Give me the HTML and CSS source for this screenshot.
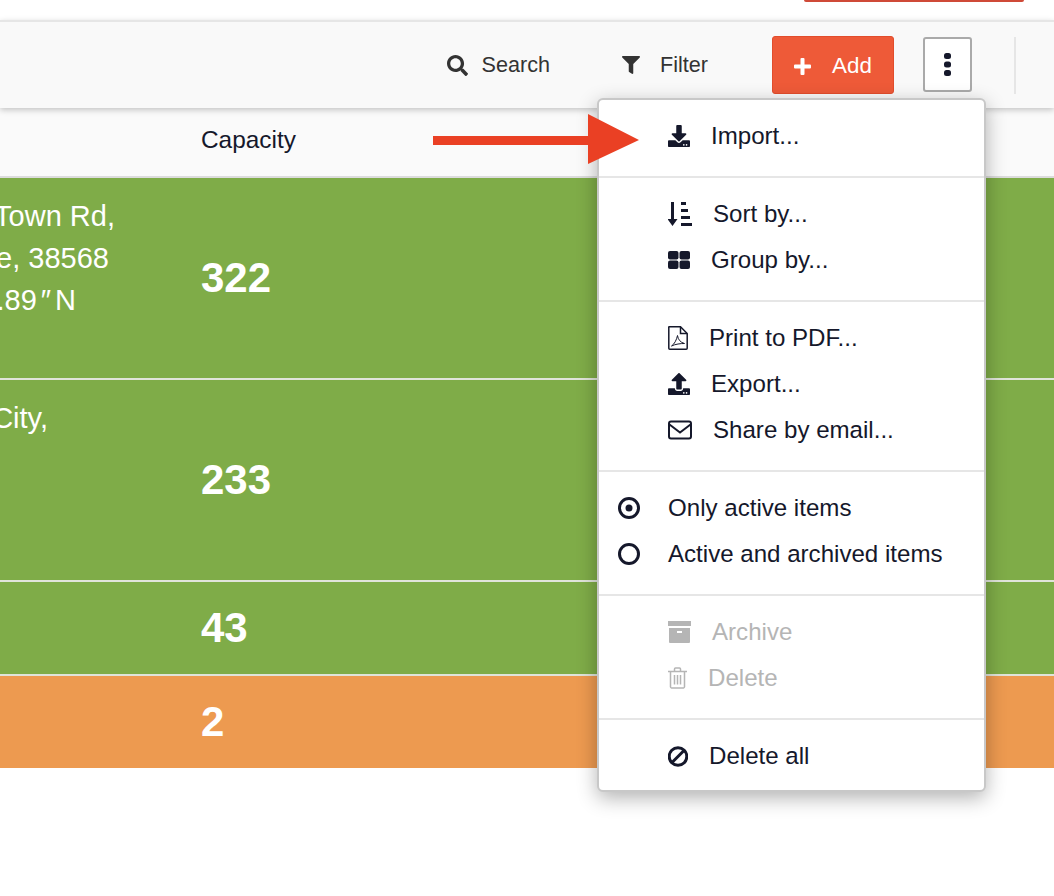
FILE: index.html
```html
<!DOCTYPE html>
<html lang="en">
<head>
    <meta charset="UTF-8">
    <title>Stores</title>
    <link rel="stylesheet" href="styles.css">
</head>
<body>
    <div class="topbar"><span class="top-button"></span></div>

    <div class="toolbar">
        <a class="tool tool-search">
            <svg class="tool-icon" width="21" height="21" viewBox="0 0 512 512"><path d="M505 442.7L405.3 343c-4.5-4.5-10.6-7-17-7H372c27.6-35.3 44-79.7 44-128C416 93.1 322.9 0 208 0S0 93.1 0 208s93.1 208 208 208c48.3 0 92.7-16.4 128-44v16.3c0 6.4 2.5 12.5 7 17l99.7 99.7c9.4 9.4 24.6 9.4 33.9 0l28.3-28.3c9.4-9.4 9.4-24.6.1-34zM208 336c-70.7 0-128-57.2-128-128 0-70.7 57.2-128 128-128 70.7 0 128 57.2 128 128 0 70.7-57.2 128-128 128z"/></svg>
            Search
        </a>
        <a class="tool tool-filter">
            <svg class="tool-icon" width="18" height="18" viewBox="0 0 512 512"><path d="M487.976 0H24.028C2.71 0-8.047 25.866 7.058 40.971L192 225.941V432c0 7.831 3.821 15.17 10.237 19.662l80 55.98C298.02 518.69 320 507.493 320 487.98V225.941l184.947-184.97C520.021 25.896 509.338 0 487.976 0z"/></svg>
            Filter
        </a>
        <button class="add-button">
            <svg width="17" height="17" viewBox="0 0 17 17"><path d="M6.500 1a1 1 0 0 1 1-1h2a1 1 0 0 1 1 1v5.500h5.500a1 1 0 0 1 1 1v2a1 1 0 0 1-1 1h-5.500V16a1 1 0 0 1-1 1h-2a1 1 0 0 1-1-1v-5.500H1a1 1 0 0 1-1-1v-2a1 1 0 0 1 1-1h5.500z"/></svg>
            Add
        </button>
        <button class="more-button">
            <svg width="7" height="23" viewBox="0 0 7 23"><rect x="0" y="0" width="7" height="6" rx="2.500"/><rect x="0" y="8.500" width="7" height="6" rx="2.500"/><rect x="0" y="17" width="7" height="6" rx="2.500"/></svg>
        </button>
        <span class="toolbar-divider"></span>
    </div>

    <div class="table-head">
        <div class="col-address"></div>
        <div class="col-capacity">Capacity</div>
    </div>

    <div class="row row-tall row-green">
        <div class="col-address">
            <div class="line line-a">Town Rd,</div>
            <div class="line line-b">e, 38568</div>
            <div class="line line-c">2.89<span class="seconds">″</span>N</div>
        </div>
        <div class="col-capacity number">322</div>
    </div>
    <div class="row row-tall row-green">
        <div class="col-address">
            <div class="line line-d">City,</div>
        </div>
        <div class="col-capacity number">233</div>
    </div>
    <div class="row row-short row-green">
        <div class="col-address"></div>
        <div class="col-capacity number">43</div>
    </div>
    <div class="row row-short row-orange">
        <div class="col-address"></div>
        <div class="col-capacity number">2</div>
    </div>

    <div class="menu">
        <div class="menu-group">
            <div class="menu-item">
                <svg width="22" height="22" viewBox="0 0 512 512"><path d="M216 0h80c13.300 0 24 10.700 24 24v168h87.700c17.800 0 26.700 21.500 14.100 34.100L269.700 378.300c-7.500 7.500-19.800 7.500-27.300 0L90.100 226.100c-12.600-12.600-3.700-34.100 14.100-34.100H192V24c0-13.300 10.700-24 24-24zm296 376v112c0 13.300-10.700 24-24 24H24c-13.300 0-24-10.700-24-24V376c0-13.300 10.700-24 24-24h146.700l49 49c20.100 20.100 52.500 20.100 72.600 0l49-49H488c13.300 0 24 10.700 24 24zm-124 88c0-11-9-20-20-20s-20 9-20 20 9 20 20 20 20-9 20-20zm64 0c0-11-9-20-20-20s-20 9-20 20 9 20 20 20 20-9 20-20z"/></svg>
                Import...
            </div>
        </div>
        <div class="menu-group">
            <div class="menu-item">
                <svg width="24" height="24" viewBox="0 0 24 24"><path d="M3 0h3v17h3.500l-5 7-5-7H3z"/><rect x="13" y="0" width="5" height="3"/><rect x="13" y="7" width="7" height="3"/><rect x="13" y="14" width="9" height="3"/><rect x="13" y="21" width="11" height="3"/></svg>
                Sort by...
            </div>
            <div class="menu-item">
                <svg width="22" height="18" viewBox="0 0 22 18"><rect x="0" y="0" width="10.500" height="8.500" rx="2"/><rect x="11.500" y="0" width="10.500" height="8.500" rx="2"/><rect x="0" y="9.500" width="10.500" height="8.500" rx="2"/><rect x="11.500" y="9.500" width="10.500" height="8.500" rx="2"/></svg>
                Group by...
            </div>
        </div>
        <div class="menu-group">
            <div class="menu-item">
                <svg class="outline" width="20" height="24" viewBox="0 0 20 24"><path d="M1 .8h11.500l6.700 6.700v14.700a1 1 0 0 1-1 1H1.800a1 1 0 0 1-1-1V1.800a1 1 0 0 1 .2-1z" stroke-width="1.500"/><path d="M12.500 1v6.500h6.500" stroke-width="1.500"/><path d="M3.500 20c3-2 5-6 6-10.500.5 4 3 7 7 8-4 0-9 .5-13 2.500z" stroke-width="1"/></svg>
                Print to PDF...
            </div>
            <div class="menu-item">
                <svg width="22" height="22" viewBox="0 0 512 512"><path d="M296 384h-80c-13.300 0-24-10.700-24-24V192h-87.700c-17.800 0-26.700-21.500-14.100-34.100L242.300 5.700c7.500-7.500 19.800-7.500 27.300 0l152.200 152.200c12.600 12.600 3.700 34.100-14.100 34.100H320v168c0 13.300-10.700 24-24 24zm216-8v112c0 13.300-10.700 24-24 24H24c-13.300 0-24-10.700-24-24V376c0-13.300 10.700-24 24-24h136v8c0 30.900 25.100 56 56 56h80c30.900 0 56-25.100 56-56v-8h136c13.300 0 24 10.700 24 24zm-124 88c0-11-9-20-20-20s-20 9-20 20 9 20 20 20 20-9 20-20zm64 0c0-11-9-20-20-20s-20 9-20 20 9 20 20 20 20-9 20-20z"/></svg>
                Export...
            </div>
            <div class="menu-item">
                <svg class="outline" width="24" height="20" viewBox="0 0 24 20" stroke-width="2"><rect x="1" y="1.500" width="22" height="17" rx="2"/><path d="M1.500 4.500l10.500 8L22.500 4.500"/></svg>
                Share by email...
            </div>
        </div>
        <div class="menu-group">
            <div class="menu-item radio-item">
                <svg width="22" height="22" viewBox="0 0 22 22"><circle class="ring" cx="11" cy="11" r="9.500"/><circle cx="11" cy="11" r="3.500"/></svg>
                Only active items
            </div>
            <div class="menu-item radio-item">
                <svg width="22" height="22" viewBox="0 0 22 22"><circle class="ring" cx="11" cy="11" r="9.500"/></svg>
                Active and archived items
            </div>
        </div>
        <div class="menu-group">
            <div class="menu-item disabled">
                <svg width="23" height="22" viewBox="0 0 23 22"><rect x="0" y="0" width="23" height="5"/><path d="M1 7h21v14a1 1 0 0 1-1 1H2a1 1 0 0 1-1-1zm8 3v2h5v-2z" fill-rule="evenodd"/></svg>
                Archive
            </div>
            <div class="menu-item disabled">
                <svg class="outline" width="19" height="22" viewBox="0 0 19 22" stroke-width="1.500"><path d="M0 4.500h19M6.500 4.500V2a1 1 0 0 1 1-1h4a1 1 0 0 1 1 1v2.500"/><path d="M2.500 4.500v15.500a1.200 1.200 0 0 0 1 1h12a1.200 1.200 0 0 0 1-1V4.500"/><path d="M6.500 8v9.500M9.500 8v9.500M12.500 8v9.500"/></svg>
                Delete
            </div>
        </div>
        <div class="menu-group">
            <div class="menu-item">
                <svg class="outline" width="20" height="21" viewBox="0 0 20 21" stroke-width="3"><circle cx="10" cy="10.500" r="8.800"/><path d="M4 16.500l12-12"/></svg>
                Delete all
            </div>
        </div>
    </div>

    <svg class="arrow" width="206" height="50" viewBox="0 0 206 50"><path d="M0 22h155V0l51 26-51 24V31H0z"/></svg>
</body>
</html>
```

FILE: styles.css
```css
html, body {
    margin: 0;
    height: 896px;
    overflow: hidden;
}
body {
    position: relative;
    background-color: #fff;
    font-family: "Liberation Sans", Arial, sans-serif;
    color: #15182b;
}
.topbar {
    height: 20px;
    display: flex;
    justify-content: flex-end;
    padding-right: 30px;
}
.top-button {
    width: 220px;
    height: 2px;
    background-color: #cf4a38;
    border-radius: 0 0 3px 3px;
}
.toolbar {
    position: relative;
    z-index: 1;
    height: 88px;
    box-sizing: border-box;
    border-top: 2px solid #e6e6e6;
    background-color: #f9f9f9;
    box-shadow: 0 2px 6px rgba(0, 0, 0, 0.22);
    display: flex;
    justify-content: flex-end;
    align-items: center;
    padding-right: 38px;
    font-size: 21.6px;
    color: #333;
}
.tool {
    display: flex;
    align-items: center;
}
.tool-icon {
    fill: #333;
}
.tool-search {
    gap: 14px;
    margin-right: 72px;
}
.tool-filter {
    gap: 20px;
    margin-right: 64px;
}
.add-button {
    width: 122px;
    height: 58px;
    margin-right: 29px;
    padding: 2px 0 0 21px;
    box-sizing: border-box;
    display: flex;
    align-items: center;
    gap: 21px;
    background-color: #ee5a38;
    border: 1px solid #e24d2c;
    border-radius: 3px;
    color: #fff;
    font: 22.4px "Liberation Sans", Arial, sans-serif;
}
.add-button svg {
    fill: #fff;
}
.more-button {
    width: 49px;
    height: 55px;
    margin: 0 42px 2px 0;
    padding: 0;
    box-sizing: border-box;
    display: flex;
    align-items: center;
    justify-content: center;
    background-color: #fff;
    border: 2px solid #aaa;
    border-radius: 3px;
}
.more-button svg {
    fill: #15182b;
}
.toolbar-divider {
    width: 2px;
    height: 57px;
    background-color: #e6e6e6;
}
.table-head {
    height: 64px;
    padding-bottom: 4px;
    display: flex;
    align-items: center;
    background-color: #fafafa;
    border-bottom: 2px solid #dcdcdc;
    font-size: 24.4px;
}
.col-address {
    width: 201px;
    flex: none;
}
.row {
    display: flex;
    box-sizing: border-box;
    color: #fff;
    border-bottom: 2px solid #e0e4da;
}
.row-tall {
    height: 202px;
}
.row-short {
    height: 94px;
}
.row-orange {
    height: 92px;
    border-bottom: none;
}
.row-green {
    background-color: #7fac48;
}
.row-orange {
    background-color: #ed9a50;
}
.row .col-address {
    padding-top: 17px;
    font-size: 29px;
    line-height: 42px;
}
.line {
    display: flex;
    justify-content: flex-end;
    white-space: nowrap;
}
.line-a {
    width: 115px;
}
.line-b {
    width: 109px;
}
.line-c {
    width: 76px;
}
.seconds {
    padding: 0 4px;
}
.line-d {
    width: 48px;
}
.number {
    align-self: center;
    font-size: 42px;
    font-weight: bold;
}
.menu {
    position: absolute;
    z-index: 2;
    left: 597px;
    top: 98px;
    width: 389px;
    box-sizing: border-box;
    background-color: #fff;
    border: 2px solid #c8c8c8;
    border-radius: 6px;
    box-shadow: 0 6px 20px rgba(0, 0, 0, 0.3);
    font-size: 24.1px;
}
.menu-group {
    padding: 13px 0 17px;
    border-bottom: 2px solid #e6e6e6;
}
.menu-group:last-child {
    padding-bottom: 11px;
    border-bottom: none;
}
.menu-item {
    height: 46px;
    display: flex;
    align-items: center;
    gap: 21px;
    padding-left: 69px;
    white-space: nowrap;
}
.menu-item svg {
    flex: none;
    fill: #15182b;
}
.menu-item svg.outline {
    fill: none;
    stroke: #15182b;
}
.ring {
    fill: none;
    stroke: #15182b;
    stroke-width: 3;
}
.radio-item {
    padding-left: 19px;
    gap: 28px;
}
.disabled {
    color: #b5b5b5;
}
.menu-item.disabled svg {
    fill: #b5b5b5;
}
.menu-item.disabled svg.outline {
    fill: none;
    stroke: #b5b5b5;
}
.arrow {
    position: absolute;
    z-index: 3;
    left: 433px;
    top: 114px;
    fill: #ea4024;
}
```
